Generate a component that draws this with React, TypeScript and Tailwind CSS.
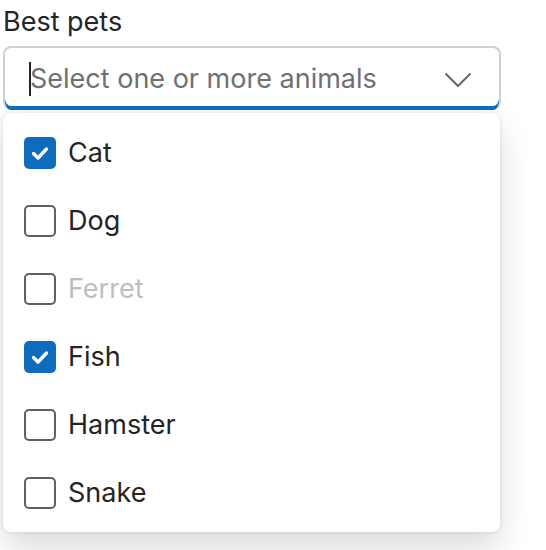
const animals = [
  { name: "Cat", checked: true, disabled: false },
  { name: "Dog", checked: false, disabled: false },
  { name: "Ferret", checked: false, disabled: true },
  { name: "Fish", checked: true, disabled: false },
  { name: "Hamster", checked: false, disabled: false },
  { name: "Snake", checked: false, disabled: false },
]

function Checkbox({ checked }: { checked: boolean }) {
  if (checked) {
    return (
      <span className="flex size-[32px] shrink-0 items-center justify-center rounded-[5px] bg-[#0f6cbd]">
        <svg width="32" height="32" viewBox="0 0 32 32" fill="none">
          <path
            d="M9.5 16.5 L14 21 L22.5 12"
            stroke="white"
            strokeWidth="3.4"
            strokeLinecap="round"
            strokeLinejoin="round"
          />
        </svg>
      </span>
    )
  }
  return <span className="size-[32px] shrink-0 rounded-[5px] border-2 border-[#616161] bg-white" />
}

export default function App() {
  return (
    <div className="min-h-[550px] bg-white pl-[3px] pt-[4px] font-['Inter',sans-serif] text-[#242424]">
      <div className="text-[27px] leading-[36px]">Best pets</div>
      <div className="mt-[6px] flex h-[64px] w-[498px] items-center rounded-[8px] border-2 border-b-0 border-[#d1d1d1] pl-[24px] pr-[27px] shadow-[inset_0_-4px_0_#0f6cbd]">
        <span className="h-[34px] w-[2px] bg-[#242424]" />
        <span className="-ml-[1px] flex-1 text-[27px] text-[#707070]">Select one or more animals</span>
        <svg width="28" height="16" viewBox="0 0 28 16" fill="none" className="mt-[1px]">
          <path d="M2 2 L14 14 L26 2" stroke="#616161" strokeWidth="1.8" strokeLinecap="round" strokeLinejoin="round" />
        </svg>
      </div>
      <div className="mt-[3px] w-[497px] rounded-[8px] bg-white pb-[5px] pt-[6px] shadow-[0_0_4px_rgba(0,0,0,0.12),0_16px_32px_rgba(0,0,0,0.14)]">
        {animals.map((a) => (
          <div key={a.name} className="flex h-[68px] items-center gap-[12px] pl-[21px]">
            <Checkbox checked={a.checked} />
            <span className={"text-[27px] " + (a.disabled ? "text-[#bdbdbd]" : "text-[#242424]")}>
              {a.name}
            </span>
          </div>
        ))}
      </div>
    </div>
  )
}
